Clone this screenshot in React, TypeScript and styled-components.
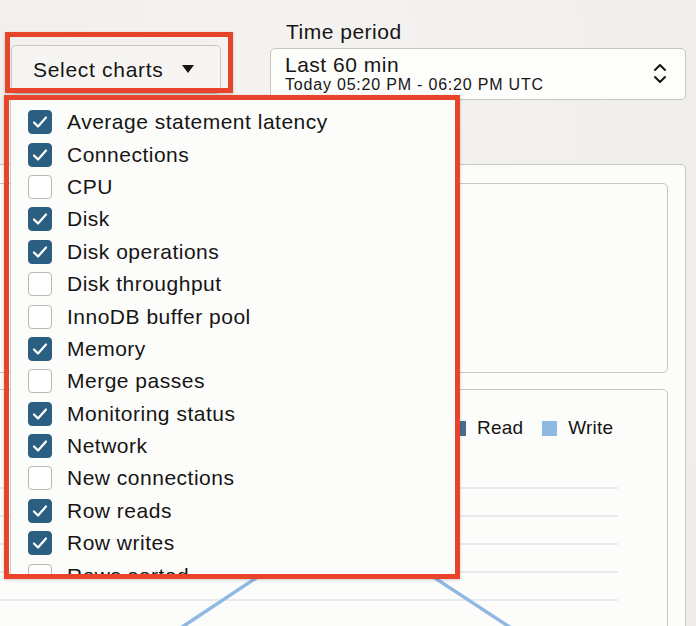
import React from "react";
import styled, { createGlobalStyle } from "styled-components";

const Global = createGlobalStyle`
  html, body { margin: 0; padding: 0; }
  body {
    width: 696px;
    height: 626px;
    overflow: hidden;
    background: #f1f0ee;
    font-family: "Liberation Sans", Arial, sans-serif;
    color: #161513;
  }
`;

const Page = styled.div`
  position: relative;
  width: 696px;
  height: 626px;
  overflow: hidden;
  background: radial-gradient(ellipse at 40% 10%, #f4f3f1 0%, #f0efed 60%, #eeedeb 100%);
`;

const Toolbar = styled.div`
  display: flex;
  align-items: flex-start;
  padding-left: 11px;
  gap: 49px;
`;

const SelectButton = styled.button`
  margin-top: 45px;
  width: 210px;
  height: 49px;
  box-sizing: border-box;
  display: flex;
  align-items: center;
  gap: 18px;
  padding: 0 0 0 21px;
  background: #f6f5f3;
  border: 1px solid #c9c6c2;
  border-radius: 5px;
  font-family: inherit;
  font-size: 21px;
  letter-spacing: 0.7px;
  color: #161513;
`;

const Field = styled.div`
  display: flex;
  flex-direction: column;
`;

const FieldLabel = styled.div`
  height: 48px;
  box-sizing: border-box;
  padding: 20px 0 0 16px;
  font-size: 21px;
  letter-spacing: 0.5px;
  line-height: 23px;
`;

const SelectBox = styled.div`
  width: 416px;
  height: 52px;
  box-sizing: border-box;
  border: 1px solid #c9c6c2;
  border-radius: 5px;
  background: #fdfdfc;
  display: flex;
  align-items: center;
  padding: 0 18px 0 14px;
`;

const SelectText = styled.div`
  flex: 1;
  display: flex;
  flex-direction: column;
  margin-top: -2px;
`;

const MainValue = styled.div`
  font-size: 21px;
  letter-spacing: 0.5px;
  line-height: 23px;
`;

const SubValue = styled.div`
  font-size: 16px;
  letter-spacing: 0.8px;
  line-height: 18px;
`;

const Panel = styled.div`
  margin: 64px 10px 0 -40px;
  height: 500px;
  border: 1px solid #c9c5c1;
  border-radius: 5px;
  background: #fcfcfb;
  padding: 18px 17px 0 0;
  display: flex;
  flex-direction: column;
  gap: 16px;
`;

const Card = styled.div<{ $h: number }>`
  position: relative;
  height: ${(p) => p.$h}px;
  flex: none;
  border: 1px solid #c9c5c1;
  border-radius: 5px;
  background: #fcfcfb;
`;

const Legend = styled.div`
  position: absolute;
  top: 27px;
  left: 489px;
  display: flex;
  align-items: center;
  font-size: 19px;
  letter-spacing: 0.2px;
`;

const Swatch = styled.span<{ $c: string; $mr: number }>`
  display: inline-block;
  width: 15px;
  height: 15px;
  background: ${(p) => p.$c};
  margin-right: 11px;
  margin-left: ${(p) => p.$mr}px;
`;

const ChartSvg = styled.svg`
  position: absolute;
  left: 0;
  top: 0;
`;

const Menu = styled.div`
  position: absolute;
  left: 10px;
  top: 100px;
  width: 446px;
  height: 477px;
  overflow: hidden;
  background: #fcfcfb;
  border-left: 1px solid #cfccc8;
  padding-top: 6px;
  box-sizing: border-box;
`;

const Item = styled.div`
  height: 32.4px;
  display: flex;
  align-items: center;
  padding-left: 17px;
  gap: 15px;
  font-size: 21px;
  letter-spacing: 0.5px;
  white-space: nowrap;
`;

const Box = styled.span<{ $on: boolean }>`
  width: 24px;
  height: 24px;
  box-sizing: border-box;
  border-radius: 4px;
  flex: none;
  display: flex;
  align-items: center;
  justify-content: center;
  background: ${(p) => (p.$on ? "#2b5f82" : "#ffffff")};
  border: 1px solid ${(p) => (p.$on ? "#2b5f82" : "#bdb7b1")};
`;

const Highlight = styled.div<{ $x: number; $y: number; $w: number; $h: number }>`
  position: absolute;
  left: ${(p) => p.$x}px;
  top: ${(p) => p.$y}px;
  width: ${(p) => p.$w}px;
  height: ${(p) => p.$h}px;
  box-sizing: border-box;
  border: 5px solid #e8432b;
  box-shadow: 0 1px 3px rgba(0, 0, 0, 0.2);
  pointer-events: none;
`;

const items: [string, boolean][] = [
  ["Average statement latency", true],
  ["Connections", true],
  ["CPU", false],
  ["Disk", true],
  ["Disk operations", true],
  ["Disk throughput", false],
  ["InnoDB buffer pool", false],
  ["Memory", true],
  ["Merge passes", false],
  ["Monitoring status", true],
  ["Network", true],
  ["New connections", false],
  ["Row reads", true],
  ["Row writes", true],
  ["Rows sorted", false],
];

const Check = () => (
  <svg width="18" height="18" viewBox="0 0 18 18">
    <polyline points="3,9.5 7,13.5 15,4.5" fill="none" stroke="#fff" strokeWidth="2.2" strokeLinecap="round" strokeLinejoin="round" />
  </svg>
);

const Caret = () => (
  <svg width="12" height="9" viewBox="0 0 12 9">
    <polygon points="0,0 12,0 6,8" fill="#161513" />
  </svg>
);

const UpDown = () => (
  <svg width="14" height="24" viewBox="0 0 14 24">
    <polyline points="2,8 7,3 12,8" fill="none" stroke="#161513" strokeWidth="2" strokeLinecap="round" strokeLinejoin="round" />
    <polyline points="2,15 7,20 12,15" fill="none" stroke="#161513" strokeWidth="2" strokeLinecap="round" strokeLinejoin="round" />
  </svg>
);

// card 2 local coords: card left = -40 + 1 (panel border) => x offset -39 ; top = 388 + 1
const OX = -39;
const OY = 389;
const gridYs = [487, 515, 543, 571, 599];

export default function App() {
  return (
    <Page>
      <Global />
      <Toolbar>
        <SelectButton>
          Select charts
          <Caret />
        </SelectButton>
        <Field>
          <FieldLabel>Time period</FieldLabel>
          <SelectBox>
            <SelectText>
              <MainValue>Last 60 min</MainValue>
              <SubValue>Today 05:20 PM - 06:20 PM UTC</SubValue>
            </SelectText>
            <UpDown />
          </SelectBox>
        </Field>
      </Toolbar>
      <Panel>
        <Card $h={188} />
        <Card $h={300}>
          <ChartSvg width="720" height="300">
            {gridYs.map((y) => (
              <line key={y} x1={0} x2={617 - OX} y1={y - OY} y2={y - OY} stroke="#e3e5e8" strokeWidth="1.5" />
            ))}
            <polyline
              points={`${160 - OX},${640 - OY} ${344 - OX},${518 - OY} ${530 - OX},${640 - OY}`}
              fill="none"
              stroke="#8fb8e2"
              strokeWidth="3.5"
            />
          </ChartSvg>
          <Legend>
            <Swatch $c="#4a6a90" $mr={0} />
            Read
            <Swatch $c="#8fb8e2" $mr={19} />
            Write
          </Legend>
        </Card>
      </Panel>
      <Menu>
        {items.map(([label, on]) => (
          <Item key={label}>
            <Box $on={on}>{on && <Check />}</Box>
            {label}
          </Item>
        ))}
      </Menu>
      <Highlight $x={5} $y={32} $w={228} $h={61} />
      <Highlight $x={4} $y={95} $w={456} $h={484} />
    </Page>
  );
}
